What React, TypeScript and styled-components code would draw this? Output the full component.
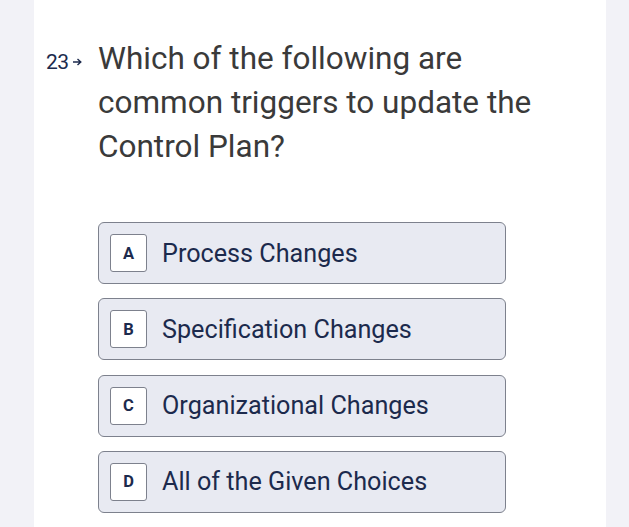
import styled, { createGlobalStyle } from "styled-components";

const GlobalStyle = createGlobalStyle`
   html, body {
      margin: 0;
      padding: 0;
      background: #f2f2f7;
   }
   body {
      font-family: Roboto, "Liberation Sans", Arial, sans-serif;
   }
`;

const Panel = styled.div`
   width: 572px;
   min-height: 100vh;
   margin-left: 34px;
   background: #ffffff;
   padding: 37px 0 0 12px;
   box-sizing: border-box;
`;

const QuestionRow = styled.div`
   display: flex;
   align-items: baseline;
`;

const Number = styled.div`
   width: 52px;
   flex-shrink: 0;
   font-size: 21px;
   color: #1c2a4d;
   letter-spacing: -0.5px;
   white-space: nowrap;
`;

const Arrow = styled.svg`
   width: 10px;
   height: 8px;
   margin-left: 3px;
   vertical-align: 3px;
`;

const QuestionText = styled.div`
   font-size: 31.5px;
   line-height: 44px;
   color: #3a3a3a;
   width: 470px;
`;

const Options = styled.div`
   display: flex;
   flex-direction: column;
   gap: 14.33px;
   margin: 53px 0 0 52px;
   width: 408px;
`;

const Option = styled.div`
   height: 62px;
   box-sizing: border-box;
   display: flex;
   align-items: center;
   padding-left: 11px;
   background: #e8eaf2;
   border: 1.5px solid #7d818d;
   border-radius: 6px;
`;

const Letter = styled.div`
   width: 37px;
   height: 38px;
   box-sizing: border-box;
   display: flex;
   align-items: center;
   justify-content: center;
   background: #ffffff;
   border: 1px solid #7d818d;
   border-radius: 3px;
   font-size: 16.5px;
   font-weight: 700;
   color: #1c2a4d;
`;

const Label = styled.div`
   margin-left: 15px;
   font-size: 25.2px;
   color: #1c2a4d;
`;

const choices = [
   { key: "A", text: "Process Changes" },
   { key: "B", text: "Specification Changes" },
   { key: "C", text: "Organizational Changes" },
   { key: "D", text: "All of the Given Choices" },
];

export default function App() {
   return (
      <>
         <GlobalStyle />
         <Panel>
            <QuestionRow>
               <Number>
                  23
                  <Arrow viewBox="0 0 10 8">
                     <path d="M1 4 H8.5 M5.5 1 L8.8 4 L5.5 7" fill="none" stroke="#1c2a4d" strokeWidth="1.4" />
                  </Arrow>
               </Number>
               <QuestionText>
                  Which of the following are common triggers to update the Control Plan?
               </QuestionText>
            </QuestionRow>
            <Options>
               {choices.map((c) => (
                  <Option key={c.key}>
                     <Letter>{c.key}</Letter>
                     <Label>{c.text}</Label>
                  </Option>
               ))}
            </Options>
         </Panel>
      </>
   );
}
